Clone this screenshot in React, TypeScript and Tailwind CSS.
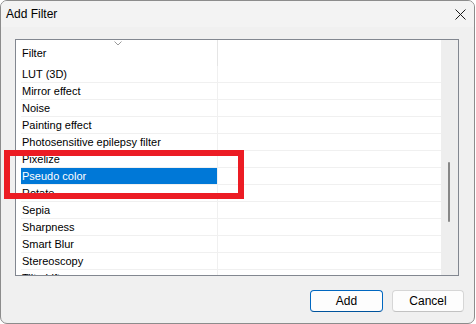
import React from "react";

const rows = [
  "LUT (3D)",
  "Mirror effect",
  "Noise",
  "Painting effect",
  "Photosensitive epilepsy filter",
  "Pixelize",
  "Pseudo color",
  "Rotate",
  "Sepia",
  "Sharpness",
  "Smart Blur",
  "Stereoscopy",
  "Tilt-shift",
];

export default function App() {
  return (
    <div className="relative w-[476px] h-[324px] bg-white font-['Liberation_Sans',Arial,sans-serif] text-black">
      <div className="w-[475px] h-[324px] border border-[#8c8c8c] rounded-[7px] bg-[#f0f0f0] overflow-hidden flex flex-col">
        {/* Title bar */}
        <div className="h-[26px] flex items-center justify-between pl-[5px] pr-[8px] bg-[#f3f3f3] shrink-0">
          <span className="text-[12px] leading-none">Add Filter</span>
          <svg width="11" height="11" viewBox="0 0 11 11" fill="none">
            <path d="M0.5 0.5 L10.5 10.5 M10.5 0.5 L0.5 10.5" stroke="#1a1a1a" strokeWidth="1" />
          </svg>
        </div>

        {/* List view */}
        <div className="ml-[14px] mt-[12px] w-[444px] h-[237px] border border-[#828790] bg-white flex shrink-0">
          <div className="flex-1 flex flex-col overflow-hidden">
            {/* header */}
            <div className="h-[26px] flex shrink-0 relative">
              <div className="w-[201px] flex items-center pl-[6px] text-[11px] relative">
                Filter
                <svg className="absolute left-[98px] top-[1px]" width="8" height="5" viewBox="0 0 8 5" fill="none">
                  <path d="M0.5 0.5 L4 4 L7.5 0.5" stroke="#9a9a9a" strokeWidth="1" />
                </svg>
              </div>
              <div className="w-px h-full bg-[#e5e5e5]" />
              <div className="flex-1" />
            </div>
            {/* rows */}
            <div className="flex-1 overflow-hidden">
              {rows.map((r) => {
                const sel = r === "Pseudo color";
                return (
                  <div key={r} className="ml-[5px] h-[17px] border-b border-[#f0f0f0] flex">
                    <div
                      className={
                        sel
                          ? "w-[196px] h-[16px] leading-[16px] pl-[1px] text-[11px] bg-[#0078d7] text-white whitespace-nowrap"
                          : "w-[196px] h-[16px] leading-[16px] pl-[1px] text-[11px] whitespace-nowrap"
                      }
                    >
                      {r}
                    </div>
                    <div className="w-px h-[16px] bg-[#f0f0f0]" />
                    <div className="flex-1" />
                  </div>
                );
              })}
            </div>
          </div>
          {/* scrollbar */}
          <div className="w-[17px] h-full bg-[#eeeeee] shrink-0">
            <div className="mt-[122px] ml-[7px] w-[2px] h-[60px] rounded-full bg-[#878787]" />
          </div>
        </div>

        {/* Buttons */}
        <div className="mt-[14px] flex justify-end gap-[9px] pr-[10px]">
          <button className="w-[73px] h-[22px] rounded-[4px] border border-[#0067c0] border-b-[#00539c] bg-[#fdfdfd] text-[12px] leading-none flex items-center justify-center">
            Add
          </button>
          <button className="w-[72px] h-[22px] rounded-[4px] border border-[#d6d6d6] border-b-[#c2c2c2] bg-[#fdfdfd] text-[12px] leading-none flex items-center justify-center">
            Cancel
          </button>
        </div>
      </div>

      {/* Red highlight annotation */}
      <div className="absolute left-[4px] top-[150px] w-[240px] h-[49px] border-[6px] border-[#ec1c24]" />
    </div>
  );
}
